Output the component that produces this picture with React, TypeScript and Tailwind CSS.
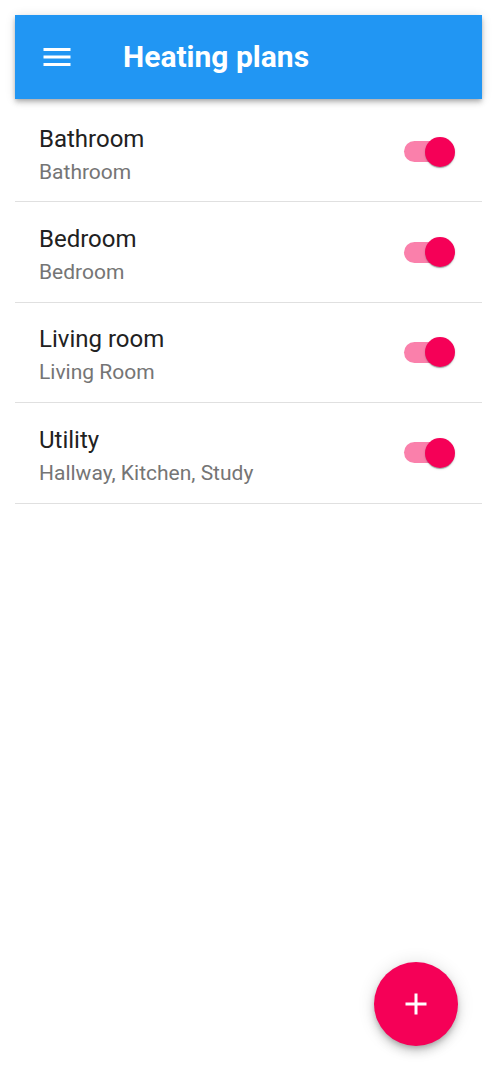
import React from "react";

interface Plan {
  name: string;
  rooms: string;
  enabled: boolean;
}

const plans: Plan[] = [
  { name: "Bathroom", rooms: "Bathroom", enabled: true },
  { name: "Bedroom", rooms: "Bedroom", enabled: true },
  { name: "Living room", rooms: "Living Room", enabled: true },
  { name: "Utility", rooms: "Hallway, Kitchen, Study", enabled: true },
];

const MenuIcon = () => (
  <svg width="36" height="36" viewBox="0 0 24 24" fill="#fff">
    <path d="M3 18h18v-2H3v2zm0-5h18v-2H3v2zm0-7v2h18V6H3z" />
  </svg>
);

const AddIcon = () => (
  <svg width="36" height="36" viewBox="0 0 24 24" fill="#fff">
    <path d="M19 13h-6v6h-2v-6H5v-2h6V5h2v6h6v2z" />
  </svg>
);

const Toggle = ({ on }: { on: boolean }) => (
  <div className="relative flex h-[30px] w-[51px] items-center">
    <div
      className={
        on
          ? "h-[21px] w-[46px] rounded-full bg-[#fa80ab]"
          : "h-[21px] w-[46px] rounded-full bg-[#bdbdbd]"
      }
    />
    <div
      className={
        on
          ? "absolute right-0 top-0 h-[30px] w-[30px] rounded-full bg-[#f50057] shadow-[0_2px_1px_-1px_rgba(0,0,0,0.2),0_1px_1px_0_rgba(0,0,0,0.14),0_1px_3px_0_rgba(0,0,0,0.12)]"
          : "absolute left-0 top-0 h-[30px] w-[30px] rounded-full bg-[#fafafa] shadow-[0_2px_1px_-1px_rgba(0,0,0,0.2),0_1px_1px_0_rgba(0,0,0,0.14),0_1px_3px_0_rgba(0,0,0,0.12)]"
      }
    />
  </div>
);

const PlanRow = ({ plan }: { plan: Plan }) => (
  <li className="box-border flex h-[100.4px] items-center justify-between border-b border-[#e0e0e0] pl-6 pr-[27px]">
    <div className="mt-[5px] flex flex-col">
      <span className="text-[24px] leading-8 text-[#212121]">{plan.name}</span>
      <span className="mt-[3px] text-[21px] leading-7 text-[#757575]">{plan.rooms}</span>
    </div>
    <Toggle on={plan.enabled} />
  </li>
);

export default function App() {
  return (
    <div className="relative min-h-[1084px] bg-white p-[15px] font-['Roboto',sans-serif]">
      <header className="relative z-10 flex h-[84px] items-center bg-[#2196f3] pl-6 shadow-[0_2px_4px_-1px_rgba(0,0,0,0.2),0_4px_5px_0_rgba(0,0,0,0.14),0_1px_10px_0_rgba(0,0,0,0.12)]">
        <MenuIcon />
        <h1 className="ml-12 text-[30px] font-bold leading-none text-white">Heating plans</h1>
      </header>
      <ul className="mt-[3px]">
        {plans.map((p) => (
          <PlanRow key={p.name} plan={p} />
        ))}
      </ul>
      <button className="absolute bottom-[38px] right-[39px] flex h-[84px] w-[84px] items-center justify-center rounded-full bg-[#f50057] shadow-[0_3px_5px_-1px_rgba(0,0,0,0.2),0_6px_10px_0_rgba(0,0,0,0.14),0_1px_18px_0_rgba(0,0,0,0.12)]">
        <AddIcon />
      </button>
    </div>
  );
}
